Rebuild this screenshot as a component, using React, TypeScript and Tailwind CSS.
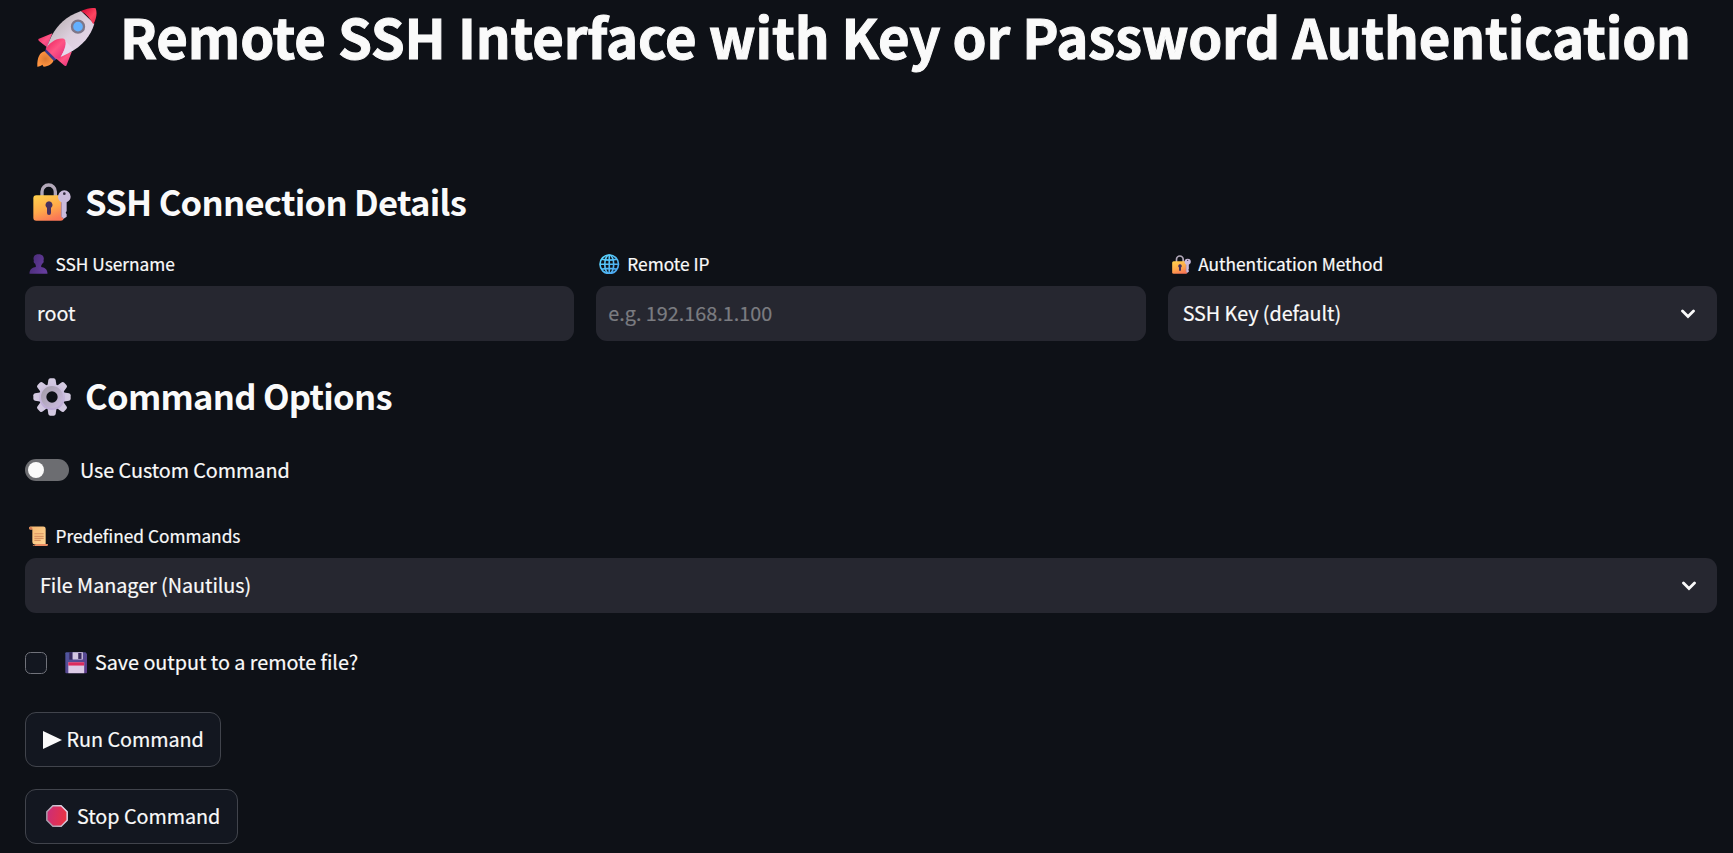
import type { ReactNode } from "react";

function Rocket() {
  return (
    <svg className="mt-[7px] h-[60px] w-[60px] shrink-0" viewBox="50 22 180 180">
      <defs>
        <linearGradient id="rk-body" x1="0" y1="0" x2="1" y2="1">
          <stop offset="0.15" stopColor="#b9b0b4" />
          <stop offset="0.5" stopColor="#dccfdd" />
          <stop offset="1" stopColor="#e9d9f0" />
        </linearGradient>
        <linearGradient id="rk-nose" x1="0" y1="0" x2="1" y2="1">
          <stop offset="0.2" stopColor="#e0173f" />
          <stop offset="0.6" stopColor="#ff4560" />
          <stop offset="1" stopColor="#e5274a" />
        </linearGradient>
        <linearGradient id="rk-fin" x1="0" y1="0" x2="1" y2="1">
          <stop offset="0" stopColor="#e81e5a" />
          <stop offset="0.5" stopColor="#ff5585" />
          <stop offset="1" stopColor="#e0287c" />
        </linearGradient>
        <radialGradient id="rk-fire">
          <stop offset="0" stopColor="#d97a33" />
          <stop offset="1" stopColor="#ff9440" />
        </radialGradient>
      </defs>
      <path d="M74 155C58 157 50 175 51 201C58 200 62 198 66 195L70 201C84 201 97 193 100 182Z" fill="url(#rk-fire)" />
      <path d="M77 145L109 178L101 184L74 156Z" fill="#3c3a8c" />
      <path d="M96 101L54 118Q53 122 57 125L80 143Z" fill="url(#rk-fin)" />
      <path d="M155 155L138 198Q134 200 131 197L108 177Z" fill="url(#rk-fin)" />
      <path d="M182 34C137 50 112 76 94 108L78 145L108 178L145 160C187 139 212 107 222 72Z" fill="url(#rk-body)" />
      <path d="M182 34C201 25 217 23 226 26C231 39 229 56 219 74C211 58 198 43 182 34Z" fill="url(#rk-nose)" />
      <path d="M76 148C86 129 113 112 132 118C142 128 132 153 119 175L107 178Z" fill="url(#rk-fin)" />
      <path d="M135 123C141 136 131 154 122 171L145 160L160 150Z" fill="#e6d8ec" />
      <circle cx="173" cy="81" r="18" fill="#63b0ff" stroke="#7e7688" strokeWidth="7" />
    </svg>
  );
}

function LockKey({ className }: { className: string }) {
  return (
    <svg className={className} viewBox="38 40 114 114">
      <defs>
        <linearGradient id="lk-body" x1="0.2" y1="0" x2="0.6" y2="1">
          <stop offset="0" stopColor="#ffcd4c" />
          <stop offset="0.55" stopColor="#ffa94a" />
          <stop offset="1" stopColor="#fa7656" />
        </linearGradient>
      </defs>
      <path d="M65 84V66a20 20 0 0 1 40 0V84" fill="none" stroke="#b3a9ba" strokeWidth="10" />
      <rect x="39" y="77" width="91" height="76" rx="9" fill="url(#lk-body)" />
      <path d="M132 62a19 19 0 0 0-19 19c0 8 4 13 10 17v43l7 6 9-6v-7l-3-5 3-5V98c7-4 12-9 12-17a19 19 0 0 0-19-19Z" fill="#cbbbdc" />
      <path d="M123 98v43l6 5" fill="none" stroke="#a98aa8" strokeWidth="3" />
      <circle cx="132" cy="72" r="4" fill="#332a40" />
      <path d="M86 95a11 11 0 0 0-6 20v15a6 6 0 0 0 12 0v-15a11 11 0 0 0-6-20Z" fill="#46305e" />
    </svg>
  );
}

function Person() {
  return (
    <svg className="h-[20px] w-[19px] shrink-0" viewBox="26 253 56 60">
      <defs>
        <linearGradient id="ps" x1="0" y1="0" x2="1" y2="0.4">
          <stop offset="0" stopColor="#452a72" />
          <stop offset="1" stopColor="#653c9c" />
        </linearGradient>
      </defs>
      <path d="M54 254c-11 0-15 6-15 14l1 4c-2 5 1 9 4 10l2 6v4c-9 1-19 6-19 20h54c0-14-10-19-19-20v-4l3-6c3-1 6-5 4-10l1-4c0-8-5-14-16-14Z" fill="url(#ps)" />
    </svg>
  );
}

function Globe() {
  return (
    <svg className="-ml-[1px] h-[20.5px] w-[20.5px] shrink-0" viewBox="0 0 62 62">
      <defs>
        <linearGradient id="gl" x1="0" y1="0" x2="62" y2="62" gradientUnits="userSpaceOnUse">
          <stop offset="0" stopColor="#5cdcff" />
          <stop offset="1" stopColor="#4a9fee" />
        </linearGradient>
      </defs>
      <g fill="none" stroke="url(#gl)" strokeWidth="5">
        <circle cx="31" cy="31" r="28" />
        <ellipse cx="31" cy="31" rx="13.500" ry="28" />
        <path d="M31 3V59M3 31H59M8 16Q31 21 54 16M8 46Q31 41 54 46" />
      </g>
    </svg>
  );
}

function Gear() {
  return (
    <svg className="mt-[3px] h-[38px] w-[38px] shrink-0" viewBox="0 0 114 114">
      <defs>
        <linearGradient id="gr-t" x1="0" y1="0" x2="0" y2="114" gradientUnits="userSpaceOnUse">
          <stop offset="0" stopColor="#d5cce2" />
          <stop offset="1" stopColor="#b8a3d4" />
        </linearGradient>
        <linearGradient id="gr-r" x1="0" y1="0" x2="1" y2="1">
          <stop offset="0" stopColor="#a59eac" />
          <stop offset="1" stopColor="#c9b9dc" />
        </linearGradient>
      </defs>
      <g fill="url(#gr-t)">
        {[0, 45, 90, 135, 180, 225, 270, 315].map((a) => (
          <path key={a} transform={`rotate(${a} 57 57)`} d="M43 26 46 6Q47 1 52 1H62Q67 1 68 6L71 26Z" />
        ))}
      </g>
      <circle cx="57" cy="57" r="31" fill="none" stroke="url(#gr-t)" strokeWidth="16" />
      <circle cx="57" cy="57" r="25" fill="none" stroke="url(#gr-r)" strokeWidth="16" />
    </svg>
  );
}

function Scroll() {
  return (
    <svg className="h-[20.5px] w-[19px] shrink-0" viewBox="27 47 57 61">
      <defs>
        <linearGradient id="sc" x1="0" y1="0" x2="1" y2="1">
          <stop offset="0" stopColor="#f3b56e" />
          <stop offset="1" stopColor="#ffd596" />
        </linearGradient>
      </defs>
      <path d="M31 48H70q7 0 7 7V102H44q-7 0-7-7V57H31q-4 0-4-4.500t4-4.500Z" fill="url(#sc)" />
      <path d="M27 53q0 4 4 4h6v-4q-3-3-5-3-5 0-5 3Z" fill="#d77b55" />
      <path d="M47 101H84q0 7-6 7H44q-5 0-6-5 2 2 5 2t4-4Z" fill="#e98c62" />
      <path d="M43 70H71M43 78H71M43 84H71M43 90H62" stroke="#d99262" strokeWidth="3.500" />
    </svg>
  );
}

function Floppy() {
  return (
    <svg className="h-[21.5px] w-[22.5px] shrink-0" viewBox="134 425 68 65">
      <defs>
        <linearGradient id="fd" x1="0" y1="0" x2="1" y2="1">
          <stop offset="0" stopColor="#4f579f" />
          <stop offset="1" stopColor="#5d3a86" />
        </linearGradient>
      </defs>
      <path d="M138 426H196L201 432V486q0 3-3 3H138q-3 0-3-3V429q0-3 3-3Z" fill="url(#fd)" />
      <path d="M147 426H157V448H147Z" fill="#36275c" />
      <path d="M157 426H188V446q0 2-2 2H159q-2 0-2-2Z" fill="#d3c6e2" />
      <path d="M174 428H184V446H174Z" fill="#36275c" />
      <path d="M144 456H192V489H144Z" fill="#dccbe6" />
      <path d="M144 456H192V466H144Z" fill="#db2b5d" />
    </svg>
  );
}

function StopSign() {
  return (
    <svg className="mb-[2px] h-[22px] w-[22px] shrink-0" viewBox="0 0 66 66">
      <defs>
        <linearGradient id="st" x1="0" y1="0" x2="1" y2="0.2">
          <stop offset="0" stopColor="#c92d7c" />
          <stop offset="1" stopColor="#ea3344" />
        </linearGradient>
        <linearGradient id="st-b" x1="0" y1="0.4" x2="1" y2="0">
          <stop offset="0" stopColor="#a79cab" />
          <stop offset="1" stopColor="#efe3f4" />
        </linearGradient>
      </defs>
      <path d="M20.500 2.500H45.500L63.500 20.500V45.500L45.500 63.500H20.500L2.500 45.500V20.500Z" fill="url(#st)" stroke="url(#st-b)" strokeWidth="4.500" strokeLinejoin="round" />
    </svg>
  );
}

function Chevron() {
  return (
    <svg className="mr-[21.500px] h-[10px] w-[14px] shrink-0" viewBox="0 0 14 10" fill="none" stroke="#fafafa" strokeWidth="2.800">
      <path d="M1.500 2 7 7.500 12.500 2" strokeLinecap="round" />
    </svg>
  );
}

function Label({ icon, children }: { icon: ReactNode; children: ReactNode }) {
  return (
    <div className="flex h-6 items-center pl-1 text-[17.300px]">
      {icon}
      <span className="ml-[7.500px] leading-6">{children}</span>
    </div>
  );
}

function Heading({ icon, children }: { icon: ReactNode; children: ReactNode }) {
  return (
    <h3 className="flex h-10 items-center pl-[7.500px] text-[34.600px] leading-10 font-semibold tracking-[-0.720px] [-webkit-text-stroke:0px]">
      {icon}
      <span className="ml-[14.500px]">{children}</span>
    </h3>
  );
}

function Select({ value }: { value: string }) {
  return (
    <button className="mt-[10px] flex h-[55px] w-full items-center justify-between rounded-[11px] bg-[#262730] pl-[15px] text-left">
      <span className="pb-[2px] leading-6 tracking-[-0.050px]">{value}</span>
      <Chevron />
    </button>
  );
}

const field =
  "mt-[10px] block h-[55px] w-full rounded-[11px] bg-[#262730] px-3 pb-[2px] outline-none placeholder:text-[#7b7c81]";

const action =
  "flex h-[55px] items-center rounded-[11px] border border-[#41444c] bg-[#131720]";

export default function App() {
  return (
    <main className="h-[853px] w-full overflow-hidden bg-[#0e1117] pr-4 pl-[25px] font-['Noto_Sans_CJK_SC','Noto_Sans',sans-serif] text-[19.800px] text-[#fafafa] [-webkit-text-stroke:0.200px]">
      <h1 className="flex h-[70px] items-start pl-[12px] text-[54.500px] leading-[71px] font-bold tracking-[-0.180px] whitespace-nowrap [-webkit-text-stroke:1px]">
        <Rocket />
        <span className="ml-[23px]">Remote SSH Interface with Key or Password Authentication</span>
      </h1>

      <section className="mt-[111px]">
        <Heading icon={<LockKey className="mt-[2px] h-[38px] w-[38px] shrink-0" />}>SSH Connection Details</Heading>
        <div className="mt-[31px] grid grid-cols-3 gap-[22px]">
          <div>
            <Label icon={<Person />}>SSH Username</Label>
            <input className={field} defaultValue="root" />
          </div>
          <div>
            <Label icon={<Globe />}>Remote IP</Label>
            <input className={field} placeholder="e.g. 192.168.1.100" />
          </div>
          <div>
            <Label icon={<LockKey className="h-[19px] w-[19px] shrink-0" />}>Authentication Method</Label>
            <Select value="SSH Key (default)" />
          </div>
        </div>
      </section>

      <section className="mt-[34px]">
        <Heading icon={<Gear />}>Command Options</Heading>

        <div className="mt-[44px] flex h-[22px] items-center">
          <span className="flex h-[22px] w-11 items-center rounded-full bg-[#6c6d71] pl-[3px]">
            <span className="h-4 w-4 rounded-full bg-[#fafafa]" />
          </span>
          <span className="ml-[11px] leading-6 tracking-[-0.060px]">Use Custom Command</span>
        </div>

        <div className="mt-[43px]">
          <Label icon={<Scroll />}>Predefined Commands</Label>
          <Select value="File Manager (Nautilus)" />
        </div>

        <div className="mt-[39px] flex h-[22px] items-center">
          <span className="h-[22px] w-[22px] rounded-[5.500px] border border-[#70727a] bg-[#131720]" />
          <span className="ml-[17.500px] flex items-center">
            <Floppy />
            <span className="ml-2 pb-[2px] leading-6 tracking-[-0.030px]">Save output to a remote file?</span>
          </span>
        </div>

        <button className={`${action} mt-[38px] w-[196px] pl-[17px]`}>
          <svg className="h-[18px] w-[19px] shrink-0" viewBox="0 0 19 18">
            <path d="M0 0 19 9 0 18Z" fill="#fafafa" />
          </svg>
          <span className="ml-[4.500px] pb-[2px] leading-6 tracking-[-0.040px]">Run Command</span>
        </button>
        <button className={`${action} mt-[22px] w-[213px] pl-[20px]`}>
          <StopSign />
          <span className="ml-[9px] pb-[2px] leading-6 tracking-[-0.040px]">Stop Command</span>
        </button>
      </section>
    </main>
  );
}
